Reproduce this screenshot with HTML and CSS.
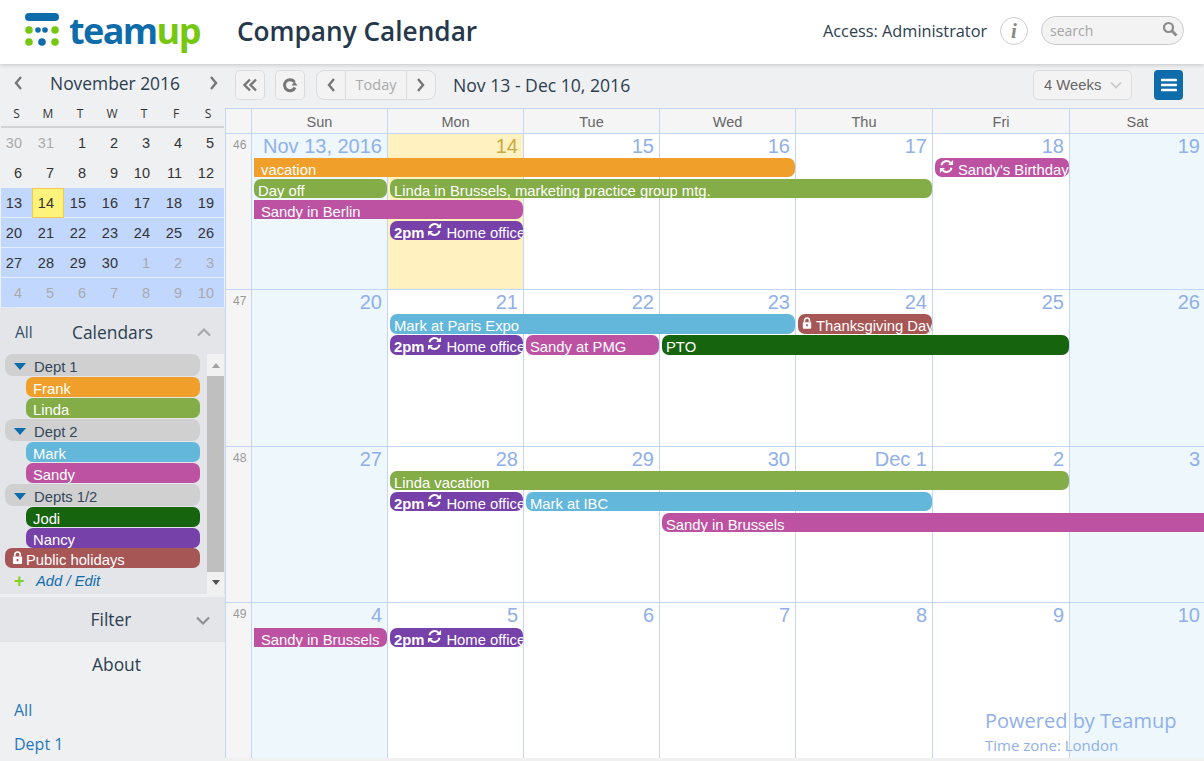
FILE: index.html
```html
<!DOCTYPE html>
<html lang="en">

<head>
  <meta charset="UTF-8">
  <title>Company Calendar</title>
  <link rel="stylesheet" href="styles.css">
</head>

<body>
  <svg class="defs" width="0" height="0">
    <symbol id="sync" viewBox="0 0 16 16">
      <path d="M2.600 6.600A5.600 5.600 0 0 1 12.200 4" fill="none" stroke="currentColor" stroke-width="2" />
      <path d="M13.400 9.400A5.600 5.600 0 0 1 3.800 12" fill="none" stroke="currentColor" stroke-width="2" />
      <path d="M9.600 6.400h5.400V1zM6.400 9.600H1V15z" fill="currentColor" />
    </symbol>
    <symbol id="lock" viewBox="0 0 12 14">
      <path d="M3 6V4a3 3 0 0 1 6 0v2" fill="none" stroke="currentColor" stroke-width="1.800" />
      <path d="M1 6h10v7a1 1 0 0 1-1 1H2a1 1 0 0 1-1-1zM5 8.500v2.500h2V8.500z" fill="currentColor" fill-rule="evenodd" />
    </symbol>
    <symbol id="left" viewBox="0 0 10 16">
      <path d="M8 2 3 8l5 6" fill="none" stroke="currentColor" stroke-width="2.400" />
    </symbol>
    <symbol id="right" viewBox="0 0 10 16">
      <path d="M2 2l5 6-5 6" fill="none" stroke="currentColor" stroke-width="2.400" />
    </symbol>
  </svg>

  <header class="topbar">
    <svg class="logo-mark" width="36" height="38" viewBox="0 0 36 38">
      <rect x="1" y="1" width="34" height="8" rx="4" fill="#0f6cab" />
      <circle cx="5" cy="18" r="3.800" fill="#75c80f" />
      <circle cx="14" cy="18" r="2.800" fill="#0f6cab" />
      <circle cx="21" cy="18" r="2.800" fill="#0f6cab" />
      <circle cx="31" cy="18" r="3.800" fill="#75c80f" />
      <circle cx="5" cy="30" r="3.800" fill="#75c80f" />
      <circle cx="18" cy="30" r="3.800" fill="#0f6cab" />
      <circle cx="31" cy="30" r="3.800" fill="#75c80f" />
    </svg>
    <div class="logo-text">team<span class="logo-up">up</span></div>
    <h1 class="cal-title">Company Calendar</h1>
    <div class="access">Access: Administrator</div>
    <div class="info-btn">i</div>
    <div class="search-box">
      <span>search</span>
      <svg width="16" height="16" viewBox="0 0 16 16">
        <circle cx="6.500" cy="6.500" r="4.500" fill="none" stroke="#8c8c8c" stroke-width="2.200" />
        <path d="M10 10l4.500 4.500" stroke="#8c8c8c" stroke-width="2.800" />
      </svg>
    </div>
  </header>

  <div class="app">
    <aside class="sidebar">
      <div class="mini-head">
        <svg class="chev" width="10" height="16"><use href="#left" /></svg>
        <span>November 2016</span>
        <svg class="chev" width="10" height="16"><use href="#right" /></svg>
      </div>
      <div class="mini-days">
        <span>S</span><span>M</span><span>T</span><span>W</span><span>T</span><span>F</span><span>S</span>
      </div>
      <div class="mini-grid">
        <span class="off">30</span><span class="off">31</span><span>1</span><span>2</span><span>3</span><span>4</span><span>5</span>
        <span>6</span><span>7</span><span>8</span><span>9</span><span>10</span><span>11</span><span>12</span>
        <span class="sel">13</span><span class="sel now">14</span><span class="sel">15</span><span class="sel">16</span><span class="sel">17</span><span class="sel">18</span><span class="sel">19</span>
        <span class="sel">20</span><span class="sel">21</span><span class="sel">22</span><span class="sel">23</span><span class="sel">24</span><span class="sel">25</span><span class="sel">26</span>
        <span class="sel">27</span><span class="sel">28</span><span class="sel">29</span><span class="sel">30</span><span class="sel off">1</span><span class="sel off">2</span><span class="sel off">3</span>
        <span class="sel off">4</span><span class="sel off">5</span><span class="sel off">6</span><span class="sel off">7</span><span class="sel off">8</span><span class="sel off">9</span><span class="sel off">10</span>
      </div>

      <section class="cal-panel">
        <div class="cal-panel-head">
          <span class="all-link">All</span>
          <span class="panel-title">Calendars</span>
          <svg class="fold" width="14" height="9" viewBox="0 0 14 9"><path d="M1 7.500l6-6 6 6" fill="none" stroke="#a6a8ac" stroke-width="2.200" /></svg>
        </div>
        <div class="cal-scroll">
          <ul class="cal-list">
            <li class="cal-group">Dept 1</li>
            <li class="cal-item orange">Frank</li>
            <li class="cal-item green">Linda</li>
            <li class="cal-group">Dept 2</li>
            <li class="cal-item sky">Mark</li>
            <li class="cal-item pink">Sandy</li>
            <li class="cal-group">Depts 1/2</li>
            <li class="cal-item forest">Jodi</li>
            <li class="cal-item purple">Nancy</li>
            <li class="cal-item cal-public brown"><svg width="11" height="13"><use href="#lock" /></svg>Public holidays</li>
            <li class="cal-add"><span class="plus">+</span><em>Add / Edit</em></li>
          </ul>
          <div class="scrollbar">
            <span class="arrow-up"></span>
            <span class="thumb"></span>
            <span class="arrow-down"></span>
          </div>
        </div>
      </section>

      <div class="side-row side-filter">
        <span>Filter</span>
        <svg class="fold" width="14" height="9" viewBox="0 0 14 9"><path d="M1 1.500l6 6 6-6" fill="none" stroke="#8f9195" stroke-width="2.200" /></svg>
      </div>
      <div class="side-row side-about">About</div>
      <div class="about-links">
        <a>All</a>
        <a>Dept 1</a>
      </div>
    </aside>

    <main class="main">
      <div class="toolbar">
        <button class="tool-btn square">
          <svg width="16" height="14" viewBox="0 0 16 14"><path d="M8 1.500 2.500 7 8 12.500M14 1.500 8.500 7l5.500 5.500" fill="none" stroke="#777" stroke-width="2.400" /></svg>
        </button>
        <button class="tool-btn square">
          <svg width="16" height="16" viewBox="0 0 16 16"><path d="M13 10.500A5.500 5.500 0 1 1 12.500 5" fill="none" stroke="#777" stroke-width="3" /><path d="M9.500 8.500h6l-3-4z" fill="#777" /></svg>
        </button>
        <div class="btn-group">
          <button class="tool-btn nav"><svg width="10" height="16" class="nav-ico"><use href="#left" /></svg></button>
          <button class="tool-btn today">Today</button>
          <button class="tool-btn nav"><svg width="10" height="16" class="nav-ico"><use href="#right" /></svg></button>
        </div>
        <div class="range">Nov 13 - Dec 10, 2016</div>
        <div class="view-select">
          <span>4 Weeks</span>
          <svg width="12" height="8" viewBox="0 0 12 8"><path d="M1 1.500l5 5 5-5" fill="none" stroke="#c8c8c8" stroke-width="1.600" /></svg>
        </div>
        <button class="menu-btn">
          <svg width="16" height="14" viewBox="0 0 16 14"><path d="M1 2h14M1 7h14M1 12h14" stroke="#fff" stroke-width="2.600" stroke-linecap="round" /></svg>
        </button>
      </div>

      <div class="calendar">
        <div class="day-head">
          <span></span><span>Sun</span><span>Mon</span><span>Tue</span><span>Wed</span><span>Thu</span><span>Fri</span><span>Sat</span>
        </div>

        <div class="week week-a">
          <div class="wk">46</div>
          <div class="cell c1 weekend">Nov 13, 2016</div>
          <div class="cell c2 today-cell">14</div>
          <div class="cell c3">15</div>
          <div class="cell c4">16</div>
          <div class="cell c5">17</div>
          <div class="cell c6">18</div>
          <div class="cell c7 weekend">19</div>

          <div class="ev orange cont c1 to5 r1">vacation</div>
          <div class="ev pink c6 to7 r1"><svg class="ev-ico" width="15" height="15"><use href="#sync" /></svg>Sandy's Birthday</div>
          <div class="ev green c1 to2 r2">Day off</div>
          <div class="ev green c2 to6 r2">Linda in Brussels, marketing practice group mtg.</div>
          <div class="ev pink cont c1 to3 r3">Sandy in Berlin</div>
          <div class="ev purple c2 to3 r4"><b>2pm</b><svg class="ev-ico" width="15" height="15"><use href="#sync" /></svg>Home office</div>
        </div>

        <div class="week week-b">
          <div class="wk">47</div>
          <div class="cell c1 weekend">20</div>
          <div class="cell c2">21</div>
          <div class="cell c3">22</div>
          <div class="cell c4">23</div>
          <div class="cell c5">24</div>
          <div class="cell c6">25</div>
          <div class="cell c7 weekend">26</div>

          <div class="ev sky c2 to5 r1">Mark at Paris Expo</div>
          <div class="ev brown c5 to6 r1"><svg class="ev-ico lock-ico" width="10" height="12"><use href="#lock" /></svg>Thanksgiving Day</div>
          <div class="ev purple c2 to3 r2"><b>2pm</b><svg class="ev-ico" width="15" height="15"><use href="#sync" /></svg>Home office</div>
          <div class="ev pink c3 to4 r2">Sandy at PMG</div>
          <div class="ev forest c4 to7 r2">PTO</div>
        </div>

        <div class="week week-c">
          <div class="wk">48</div>
          <div class="cell c1 weekend">27</div>
          <div class="cell c2">28</div>
          <div class="cell c3">29</div>
          <div class="cell c4">30</div>
          <div class="cell c5">Dec 1</div>
          <div class="cell c6">2</div>
          <div class="cell c7 weekend">3</div>

          <div class="ev green c2 to7 r1">Linda vacation</div>
          <div class="ev purple c2 to3 r2"><b>2pm</b><svg class="ev-ico" width="15" height="15"><use href="#sync" /></svg>Home office</div>
          <div class="ev sky c3 to6 r2">Mark at IBC</div>
          <div class="ev pink open c4 to8 r3">Sandy in Brussels</div>
        </div>

        <div class="week week-d">
          <div class="wk">49</div>
          <div class="cell c1 weekend">4</div>
          <div class="cell c2">5</div>
          <div class="cell c3">6</div>
          <div class="cell c4">7</div>
          <div class="cell c5">8</div>
          <div class="cell c6">9</div>
          <div class="cell c7 weekend">10</div>

          <div class="ev pink cont c1 to2 r1">Sandy in Brussels</div>
          <div class="ev purple c2 to3 r1"><b>2pm</b><svg class="ev-ico" width="15" height="15"><use href="#sync" /></svg>Home office</div>
        </div>

        <div class="powered">
          <div class="powered-name">Powered by Teamup</div>
          <div class="powered-tz">Time zone: London</div>
        </div>
      </div>
    </main>
  </div>
</body>

</html>
```

FILE: styles.css
```css
* {
  box-sizing: border-box;
}

html,
body {
  height: 100%;
}

body {
  margin: 0;
  overflow: hidden;
  background-color: #f0f0f0;
  color: #2c3e50;
  font-family: "Open Sans", sans-serif;
}

.defs {
  position: absolute;
}

/* top bar */
.topbar {
  display: flex;
  align-items: center;
  position: relative;
  z-index: 1;
  height: 64px;
  padding-left: 24px;
  background-color: #fff;
  box-shadow: 0 1px 4px rgba(0, 0, 0, 0.18);
}

.logo-mark {
  margin-top: -2px;
}

.logo-text {
  width: 168px;
  margin-left: 9px;
  margin-top: -3px;
  color: #0f6cab;
  font-size: 36px;
  font-weight: 700;
  letter-spacing: -1.600px;
}

.logo-up {
  color: #75c80f;
}

.cal-title {
  width: 586px;
  margin: -2px 0 0;
  font-size: 26.200px;
  font-weight: 600;
  color: #25384b;
}

.access {
  width: 177px;
  margin-top: -2px;
  font-size: 16.300px;
}

.info-btn {
  width: 28px;
  height: 28px;
  margin-top: -2px;
  border: 1px solid #ccc;
  border-radius: 50%;
  color: #888;
  font-family: "Liberation Serif", serif;
  font-size: 21px;
  font-style: italic;
  font-weight: bold;
  line-height: 26px;
  text-align: center;
}

.search-box {
  display: flex;
  align-items: center;
  justify-content: space-between;
  width: 143px;
  height: 29px;
  margin: -3px 0 0 13px;
  padding: 0 5px 0 8px;
  border: 1px solid #ccc;
  border-radius: 15px;
  background-color: #f3f3f3;
  color: #a5a5a5;
  font-size: 14px;
}

.search-box svg {
  margin-top: -3px;
}

/* layout */
.app {
  display: flex;
  height: 697px;
}

.sidebar {
  flex: none;
  width: 225px;
  padding-left: 1px;
  background-color: #eff0f2;
}

.main {
  flex: 1;
  min-width: 0;
}

/* mini calendar */
.mini-head {
  display: flex;
  align-items: center;
  justify-content: space-between;
  height: 37px;
  margin-bottom: 1px;
  padding: 0 6px 0 12px;
  font-size: 17.400px;
  color: #2c3e50;
}

.mini-head span {
  margin-left: -2px;
}

.chev {
  color: #777;
}

.mini-days,
.mini-grid {
  display: grid;
  grid-template-columns: 31px repeat(5, 32px) 32px;
  width: 223px;
}

.mini-days {
  height: 26px;
  padding-top: 2px;
  border-bottom: 2px solid #d2d3d5;
  font-size: 12px;
  line-height: 20px;
  text-align: center;
  color: #333;
}

.mini-grid {
  grid-auto-rows: 30px;
  height: 180px;
  font-family: "Liberation Sans", sans-serif;
  font-size: 14.500px;
  color: #333;
}

.mini-grid span {
  padding-right: 10px;
  line-height: 30px;
  text-align: right;
}

.mini-grid .sel {
  background-color: #c1d7fd;
  border-bottom: 1px solid #e3ecfc;
}

.mini-grid .off {
  color: #aaa;
}

.mini-grid .now {
  border: 1px solid #f6c94e;
  background-color: #fdf27c;
  line-height: 28px;
  padding-right: 9px;
}

/* calendars list */
.cal-panel {
  height: 286px;
  margin-left: -1px;
  margin-bottom: 3px;
  background-color: #e4e5e9;
}

.cal-panel-head {
  display: flex;
  align-items: center;
  height: 46px;
  padding: 2px 13px 0 15px;
}

.all-link {
  width: 57px;
  font-size: 15.500px;
  color: #35506b;
}

.panel-title {
  width: 125px;
  font-size: 17.400px;
}

.cal-scroll {
  display: flex;
  height: 240px;
}

.cal-list {
  flex: none;
  width: 207px;
  margin: 0;
  padding: 0 7px 0 5px;
  list-style: none;
  font-family: "Liberation Sans", sans-serif;
  font-size: 14.800px;
}

.cal-group {
  position: relative;
  height: 22px;
  margin-bottom: 1px;
  padding-left: 29px;
  border-radius: 8px;
  background-color: #d0d0d0;
  color: #35485a;
  line-height: 26px;
}

.cal-group::before {
  content: "";
  position: absolute;
  left: 9px;
  top: 9px;
  border-style: solid;
  border-width: 7px 6px 0;
  border-color: #0f6cab transparent transparent;
}

.cal-item {
  height: 20px;
  margin-bottom: 1px;
  margin-left: 21px;
  padding-left: 7px;
  overflow: hidden;
  border-radius: 7px;
  color: #fff;
  line-height: 25px;
}

.cal-public {
  display: flex;
  align-items: flex-start;
  margin-left: 0;
  margin-top: -1px;
  padding-left: 7px;
}

.cal-public svg {
  flex: none;
  margin: 3px 3px 0 0;
  color: #fff;
}

.cal-add {
  display: flex;
  align-items: center;
  height: 22px;
  padding: 2px 0 0 9px;
  color: #0f6cab;
}

.plus {
  width: 22px;
  color: #7ed321;
  font-size: 18px;
  font-weight: bold;
}

.scrollbar {
  display: flex;
  flex-direction: column;
  align-items: center;
  justify-content: space-between;
  width: 17px;
  height: 240px;
  background-color: #f1f1f1;
}

.thumb {
  width: 17px;
  height: 196px;
  background-color: #bfbfbf;
}

.arrow-up {
  margin-top: 9px;
  border-style: solid;
  border-width: 0 4.500px 5px;
  border-color: transparent transparent #a3a3a3;
}

.arrow-down {
  margin-bottom: 9px;
  border-style: solid;
  border-width: 5px 4.500px 0;
  border-color: #505050 transparent transparent;
}

.side-row {
  position: relative;
  height: 45px;
  font-size: 17.400px;
  line-height: 45px;
  text-align: center;
}

.side-filter {
  margin-left: -1px;
  padding-right: 3px;
  background-color: #e4e5e9;
}

.side-about {
  padding-left: 7px;
}

.side-filter .fold {
  position: absolute;
  right: 15px;
  top: 19px;
}

.about-links {
  display: flex;
  flex-direction: column;
  gap: 12px;
  padding: 12px 0 0 13px;
  font-size: 16px;
  color: #1f78b8;
}

/* toolbar */
.toolbar {
  display: flex;
  align-items: center;
  height: 44px;
  padding: 0 21px 2px 10px;
  background-color: #eff0f2;
}

.tool-btn {
  display: flex;
  align-items: center;
  justify-content: center;
  height: 30px;
  padding: 0;
  border: 1px solid #dcdcdc;
  background-color: #f3f3f3;
  font-family: "Liberation Sans", sans-serif;
}

.square {
  width: 30px;
  margin-right: 10px;
  border-radius: 5px;
}

.btn-group {
  display: flex;
  margin-left: 1px;
}

.nav {
  width: 30px;
  color: #777;
}

.nav:first-child {
  border-radius: 8px 0 0 8px;
}

.nav:last-child {
  border-radius: 0 8px 8px 0;
}

.today {
  width: 60px;
  padding-bottom: 2px;
  border-width: 1px 0;
  color: #aaa;
  font-size: 14.500px;
  font-family: "Open Sans", sans-serif;
}

.range {
  flex: 1;
  margin-left: 17px;
  font-size: 17.600px;
  color: #2c3e50;
}

.view-select {
  display: flex;
  align-items: center;
  justify-content: space-between;
  width: 99px;
  height: 30px;
  padding: 0 9px 0 10px;
  border: 1px solid #dcdcdc;
  border-radius: 5px;
  background-color: #f3f3f3;
  color: #666;
  font-family: "Liberation Sans", sans-serif;
  font-size: 14.800px;
}

.menu-btn {
  display: flex;
  align-items: center;
  justify-content: center;
  width: 29px;
  height: 30px;
  margin-left: 22px;
  padding: 0;
  border: 0;
  border-radius: 4px;
  background-color: #0f6cab;
}

/* calendar grid */
.calendar {
  position: relative;
  width: 980px;
  background-color: #fff;
  border-left: 1px solid #c2d6fb;
  font-family: "Liberation Sans", sans-serif;
}

.day-head,
.week {
  display: grid;
  grid-template-columns: 25px repeat(4, 136px) 137px 137px 136px;
}

.day-head {
  height: 26px;
  border-top: 1px solid #c2d6fb;
  border-bottom: 1px solid #c2d6fb;
  background-color: #f5f5f5;
  color: #666;
  font-size: 14.500px;
  line-height: 27px;
  text-align: center;
}

.day-head span {
  border-left: 1px solid #c2d6fb;
}

.day-head span:first-child {
  border-left: 0;
}

.week {
  grid-template-rows: 24px repeat(4, 21px) 1fr;
  height: 156px;
  overflow: hidden;
  border-bottom: 1px solid #c2d6fb;
}

.week-b {
  height: 157px;
}

.week-d {
  grid-template-rows: 25px repeat(4, 21px) 1fr;
  height: 155px;
  border-bottom: 0;
}

.wk {
  grid-row: 1 / -1;
  grid-column: 1;
  padding: 4px 0 0 7px;
  background-color: #f5f5f5;
  color: #999;
  font-size: 12px;
}

.cell {
  grid-row: 1 / -1;
  padding-right: 5px;
  border-left: 1px solid #c2d6fb;
  color: #8fb0ea;
  font-size: 20px;
  line-height: 24px;
  text-align: right;
  white-space: nowrap;
}

.weekend {
  background-color: #eef7fc;
}

.today-cell {
  background-color: #fff2c0;
  color: #c9a83f;
}

.c1 { grid-column-start: 2; }
.c2 { grid-column-start: 3; }
.c3 { grid-column-start: 4; }
.c4 { grid-column-start: 5; }
.c5 { grid-column-start: 6; }
.c6 { grid-column-start: 7; }
.c7 { grid-column-start: 8; }

.to2 { grid-column-end: 3; }
.to3 { grid-column-end: 4; }
.to4 { grid-column-end: 5; }
.to5 { grid-column-end: 6; }
.to6 { grid-column-end: 7; }
.to7 { grid-column-end: 8; }
.to8 { grid-column-end: 9; }

.r1 { grid-row: 2; }
.r2 { grid-row: 3; }
.r3 { grid-row: 4; }
.r4 { grid-row: 5; }

/* events */
.ev {
  display: flex;
  align-items: flex-start;
  height: 19px;
  margin-left: 3px;
  padding-left: 4px;
  overflow: hidden;
  border-radius: 7px;
  color: #fff;
  font-size: 14.800px;
  line-height: 25px;
  white-space: nowrap;
}

.week-b .ev {
  height: 20px;
}

.cont {
  padding-left: 7px;
  border-radius: 0 7px 7px 0;
}

.open {
  border-radius: 7px 0 0 7px;
}

.ev b {
  margin-right: 3px;
}

.ev-ico {
  flex: none;
  margin: 1px 4px 0 0;
}

.lock-ico {
  margin: 3px 4px 0 0;
}

.orange { background-color: #ef9f2a; }
.green { background-color: #84ac47; }
.sky { background-color: #62b7da; }
.pink { background-color: #bd52a2; }
.forest { background-color: #17640f; }
.purple { background-color: #7641a9; }
.brown { background-color: #a75656; }

.powered {
  position: absolute;
  left: 759px;
  top: 599px;
  color: #8fb0ea;
  font-family: "Open Sans", sans-serif;
}

.powered-name {
  font-size: 20px;
  line-height: 27px;
}

.powered-tz {
  font-size: 15px;
  line-height: 22px;
}
```
